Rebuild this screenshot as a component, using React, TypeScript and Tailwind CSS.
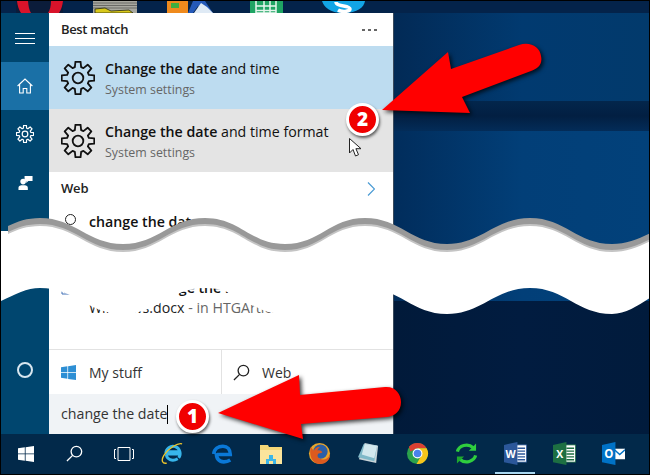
import React from 'react'

const FONT = "font-['Open_Sans','Noto_Sans',sans-serif]"

// eight toothed cog outline, same shape in the results and (smaller) in the sidebar
const cogPath = () => {
  const pts: string[] = []
  const teeth = 8
  for (let i = 0; i < teeth; i++) {
    const a = (i / teeth) * Math.PI * 2 - Math.PI / 2
    const step = (Math.PI * 2) / teeth
    const spots: [number, number][] = [
      [10.6, a - step * 0.36],
      [15.5, a - step * 0.2],
      [15.5, a + step * 0.2],
      [10.6, a + step * 0.36],
    ]
    spots.forEach(([r, t]) => pts.push(`${(16 + r * Math.cos(t)).toFixed(2)} ${(16 + r * Math.sin(t)).toFixed(2)}`))
  }
  return `M${pts.join('L')}Z`
}

const Cog = ({ className, color = '#111', width = 1.7 }: { className: string; color?: string; width?: number }) => (
  <svg viewBox="0 0 32 32" className={className} fill="none" stroke={color} strokeWidth={width} strokeLinejoin="round">
    <path d={cogPath()} />
    <circle cx="16" cy="16" r="5" />
  </svg>
)

const Magnifier = ({ className, color }: { className: string; color: string }) => (
  <svg viewBox="0 0 18 18" className={className} fill="none" stroke={color} strokeWidth="1.4">
    <circle cx="11" cy="7" r="5.6" />
    <path d="M7 11 1 17" />
  </svg>
)

const WindowsMark = ({ className, color }: { className: string; color: string }) => (
  <svg viewBox="0 0 16 16" className={className} fill={color}>
    <path d="M0 2.3 6.8 1.3v6.2H0zM7.6 1.2 16 0v7.5H7.6zM0 8.3h6.8v6.4L0 13.7zM7.6 8.3H16V16l-8.4-1.2z" />
  </svg>
)

const ResultRow = ({ bg, tail }: { bg: string; tail: string }) => (
  <div className={`flex h-[63px] items-center ${bg}`}>
    <Cog className="ml-[12px] h-[34px] w-[34px] shrink-0" />
    <div className="ml-[10px] pt-[4px]">
      <div className="text-[14.2px] leading-[20px] text-[#111]">
        <span className="font-semibold">Change the date</span> {tail}
      </div>
      <div className="text-[12.4px] leading-[21px] text-[#666]">System settings</div>
    </div>
  </div>
)

const SideItem = ({ children, active }: { children: React.ReactNode; active?: boolean }) => (
  <div className={`flex h-[48px] items-center justify-center ${active ? 'bg-[#1a70a6]' : ''}`}>{children}</div>
)

const Sidebar = () => (
  <div className="flex w-[48px] shrink-0 flex-col bg-[#00466f]">
    <div className="flex h-[49px] flex-col items-center justify-center gap-[4px] pt-[2px]">
      <div className="h-px w-[20px] bg-white" />
      <div className="h-px w-[20px] bg-white" />
      <div className="h-px w-[20px] bg-white" />
    </div>
    <SideItem active>
      <svg viewBox="0 0 16 16" className="h-[16px] w-[16px]" fill="none" stroke="#fff" strokeWidth="1.1">
        <path d="M.6 8 8 1l7.4 7M2.6 6.5V15h3.6v-4.5h3.600V15h3.600V6.500" />
      </svg>
    </SideItem>
    <SideItem>
      <Cog className="h-[18px] w-[18px]" color="#fff" width={2.2} />
    </SideItem>
    <SideItem>
      <svg viewBox="0 0 16 16" className="h-[17px] w-[15px]" fill="#fff">
        <circle cx="5.5" cy="7" r="3" />
        <path d="M.5 16v-2.3C.5 11.6 2.5 11 5.5 11s5 .6 5 2.7V16z" />
        <path d="M7 1h8.5v5.500H11L8.800 8.400V6.500H7z" />
      </svg>
    </SideItem>
    <div className="mt-auto flex h-[84px] items-start justify-center pt-[12px]">
      <div className="h-[16px] w-[16px] rounded-full border-2 border-[#d8e6ef]" />
    </div>
  </div>
)

const Panel = () => (
  <div className="flex w-[345px] shrink-0 flex-col border-r border-[#3a4a5c] bg-white">
    <div className="flex h-[33px] items-center justify-between pl-[12px] pr-[16px]">
      <span className="text-[13px] font-semibold tracking-[-0.35px] text-[#222]">Best match</span>
      <span className="flex gap-[2px] pt-px">
        <i className="h-[2px] w-[3px] bg-[#666]" />
        <i className="ml-[1px] h-[2px] w-[3px] bg-[#666]" />
        <i className="ml-[1px] h-[2px] w-[3px] bg-[#666]" />
      </span>
    </div>
    <ResultRow bg="bg-[#bddcf0]" tail="and time" />
    <ResultRow bg="bg-[#e4e4e4]" tail="and time format" />
    <div className="flex h-[33px] items-center justify-between pl-[12px] pr-[18px]">
      <span className="text-[13px] font-semibold tracking-[-0.2px] text-[#222]">Web</span>
      <svg viewBox="0 0 8 14" className="h-[14px] w-[8px]" fill="none" stroke="#4a9bd4" strokeWidth="1.2">
        <path d="M1 .5 7.5 7 1 13.5" />
      </svg>
    </div>
    <div className="flex items-center pl-[16px] pt-[5px]">
      <div className="mb-[6px] h-[11px] w-[11px] rounded-full border border-[#222]" />
      <span className="ml-[13px] text-[14.2px] font-semibold leading-[24px] text-[#111]">change the date</span>
    </div>
    <div className="mt-auto flex flex-col pb-[31px]">
      <div className="flex items-center pl-[12px] pr-[47px]">
        <svg viewBox="0 0 12 14" className="h-[14px] w-[12px] shrink-0" fill="none" stroke="#3f6fb5">
          <path d="M1 1h7l3 3v9H1zM3 9h6M3 11h6" />
        </svg>
        <span className="ml-[18px] text-[14.2px] font-semibold leading-[20px] text-[#111]">How to Change the .</span>
        <span className="ml-auto h-[3px] w-[2px] bg-[#777]" />
      </div>
      <div className="pl-[40px] text-[14.2px] leading-[20px] text-[#222]">
        Windows.docx <span className="text-[#666]">- in HTGArticles</span>
      </div>
    </div>
    <div className="flex h-[45px] border-t border-[#e2e2e2]">
      <div className="flex w-[173px] items-center border-r border-[#e2e2e2] pl-[12px]">
        <WindowsMark className="h-[15px] w-[15px]" color="#2e8fd4" />
        <span className="ml-[13px] text-[14px] text-[#333]">My stuff</span>
      </div>
      <div className="flex items-center pl-[11px]">
        <Magnifier className="h-[17px] w-[17px]" color="#222" />
        <span className="ml-[12px] text-[14px] text-[#333]">Web</span>
      </div>
    </div>
    <div className="flex h-[40px] items-center bg-[#f0f3f6] pl-[12px]">
      <span className="text-[14.2px] text-[#333]">change the date</span>
      <span className="h-[19px] w-px bg-black" />
    </div>
  </div>
)

const TopStrip = () => (
  <div className="flex h-[12px] shrink-0 overflow-hidden bg-[#04234a]">
    <svg viewBox="0 0 47 12" className="ml-[15px] h-[12px] w-[47px] shrink-0">
      <rect width="47" height="12" fill="#0b1c3a" />
      <path d="M1 0H12C12.500 5 13 9 15 12H5C3 9 1.500 5 1 0Z" fill="#d9132a" />
      <path d="M35 0H47C46.500 5 45 9 43 12H32C34 9 35 5 35 0Z" fill="#d9132a" />
    </svg>
    <svg viewBox="0 0 44 12" className="ml-[30px] h-[12px] w-[44px] shrink-0">
      <rect width="44" height="12" fill="#a8a8a0" />
      <path d="M0 2H44M0 4.500H44M0 7H44" stroke="#6a6a66" />
      <path d="M2 8 12 7 18 10 36 9 40 12H2Z" fill="#d8c81a" stroke="#2a2a10" strokeWidth=".8" />
    </svg>
    <svg viewBox="0 0 46 12" className="ml-[30px] h-[12px] w-[46px] shrink-0">
      <rect x="0" y="0" width="21" height="12" fill="#ef8a1d" />
      <path d="M4 2h8v5H4z" fill="#3fae3f" />
      <path d="M21 12 26 0H38L46 12H38L31 5 26 12Z" fill="#2459b8" />
      <path d="M27 12 34 2 40 6 46 12Z" fill="#dfeaf5" />
    </svg>
    <svg viewBox="0 0 33 12" className="ml-[37px] h-[12px] w-[33px] shrink-0">
      <rect width="33" height="12" fill="#1fa463" />
      <path d="M6 0V12H26V0M6 5H26M6 9.500H26M14 0V12M20 0V12" fill="none" stroke="#e8f6ee" strokeWidth="1.500" />
    </svg>
    <svg viewBox="0 0 43 12" className="ml-[39px] h-[12px] w-[43px] shrink-0">
      <path d="M0 0H43C42 6 36 12 21 12 8 12 2 6 0 0Z" fill="#12a5e6" />
      <path d="M14 1C14 6 28 4 28 8 28 11 19 11 16 9" fill="none" stroke="#fff" strokeWidth="3.500" />
    </svg>
  </div>
)

const Desktop = () => (
  <div className="flex min-w-0 flex-1 flex-col">
    <div className="h-[88px] bg-gradient-to-r from-[#022a56] via-[#013a70] to-[#023a6c]" />
    <div className="h-[30px] bg-gradient-to-b from-[#03264c] via-[#021f42] to-[#032c58]" />
    <div className="h-[170px] bg-gradient-to-r from-[#012d5c] via-[#023f78] to-[#02417a]" />
    <div className="flex-1 bg-gradient-to-r from-[#011a3a] via-[#011c40] to-[#011b3c]" />
  </div>
)

const taskIcons: React.ReactNode[] = [
  <WindowsMark key="start" className="h-[16px] w-[16px]" color="#fff" />,
  <Magnifier key="search" className="h-[17px] w-[17px]" color="#fff" />,
  <svg key="view" viewBox="0 0 20 14" className="h-[14px] w-[20px]" fill="none" stroke="#fff" strokeWidth="1">
    <path d="M4 .5H16V13.500H4zM2 2.500H.5V11.500H2M18 2.500H19.500V11.500H18" />
  </svg>,
  <svg key="ie" viewBox="0 0 24 24" className="h-[23px] w-[23px]" fill="none">
    <path d="M5 12a7.500 7.500 0 1 1 13.500 4.500M5 12.500h14.500a7.500 7.500 0 0 0-.5-2.500H6" stroke="#37b5ea" strokeWidth="3" />
    <path d="M5.500 13c.5 5 6 8 12 4.500" stroke="#37b5ea" strokeWidth="3" />
    <path d="M22 2C18 .5 8 6 3 14-.5 20 2 23 6 22" stroke="#eec52a" strokeWidth="1.400" />
  </svg>,
  <svg key="edge" viewBox="0 0 24 24" className="h-[22px] w-[22px]" fill="none" stroke="#0a78d7">
    <path d="M3 12C3.500 6.500 8 3.500 13 3.500c5 0 8 3.500 8 9H6.500" strokeWidth="4" />
    <path d="M6 11c-.5 6 3 9.500 8 9.500 2.500 0 5-.7 7-2" strokeWidth="4" />
  </svg>,
  <svg key="folder" viewBox="0 0 22 20" className="h-[20px] w-[22px]">
    <path d="M0 1h8l1 2h13v17H0z" fill="#f5d777" />
    <path d="M0 6h22v14H0z" fill="#fbe49c" />
    <path d="M6 20v-5h3V11h4v4h3v5h-3v-3H9v3z" fill="#3cb6e8" />
  </svg>,
  <svg key="fox" viewBox="0 0 24 24" className="h-[23px] w-[23px]">
    <circle cx="12" cy="12" r="11" fill="#e8a52a" />
    <circle cx="13" cy="10" r="7.500" fill="#2a5fa8" />
    <path d="M3 5C1 12 3 23 13 23c6 0 10-5 10-10-2 4-5 6-9 5-4-1-5-4-3-6 2 0 3-1 4-1-1-2-3-3-5-2 0-1 1-3 3-4-4 0-6 2-7 4C5 8 4 7 3 5Z" fill="#dc5a1f" />
  </svg>,
  <svg key="note" viewBox="0 0 24 24" className="h-[23px] w-[23px]">
    <path d="M8 1 22 4 20 22 2 18Z" fill="#c9d4d8" />
    <path d="M7 2 21 4 18 20 1 16Z" fill="#7fb8c8" />
    <path d="M8 2 21 4 18 17 5 13Z" fill="#d3e8ee" />
  </svg>,
  <svg key="chrome" viewBox="0 0 24 24" className="h-[23px] w-[23px]">
    <circle cx="12" cy="12" r="11" fill="#2ba24c" />
    <path d="M12 1A11 11 0 0 1 21.500 6.500H12L4.500 10 3 5A11 11 0 0 1 12 1Z" fill="#dc4032" />
    <path d="M21.500 6.500A11 11 0 0 1 11 23L16 14 12 6.500Z" fill="#f6c51c" />
    <circle cx="12" cy="12" r="5.200" fill="#fff" />
    <circle cx="12" cy="12" r="4" fill="#4a82ea" />
  </svg>,
  <svg key="sync" viewBox="0 0 24 24" className="h-[23px] w-[23px]" fill="none" stroke="#2fce3e" strokeWidth="3.400">
    <path d="M2.500 10C4 4 13 .5 19 6" />
    <path d="M21.500 14C20 20 11 23.500 5 18" />
    <path d="M22 1.500V9h-7.500z" fill="#2fce3e" stroke="none" />
    <path d="M2 22.500V15h7.500z" fill="#1ea82e" stroke="none" />
  </svg>,
  <OfficeIcon key="word" letter="W" color="#2b579a" />,
  <OfficeIcon key="excel" letter="X" color="#1d6f42" />,
  <svg key="outlook" viewBox="0 0 24 24" className="h-[23px] w-[23px]">
    <path d="M13 7h11v11H13z" fill="#fff" />
    <path d="m13 8 5.500 5L24 8" fill="none" stroke="#0072c6" strokeWidth="1.500" />
    <path d="M0 3 14 0v24L0 21Z" fill="#0072c6" />
    <text x="7" y="17" textAnchor="middle" fontSize="12" fontWeight="700" fill="#fff" fontFamily="Open Sans">O</text>
  </svg>,
]

function OfficeIcon({ letter, color }: { letter: string; color: string }) {
  return (
    <svg viewBox="0 0 24 24" className="h-[23px] w-[23px]">
      <path d="M12 3h11.500v18H12z" fill="#fff" stroke={color} strokeWidth=".8" />
      <path d="M14 6.500h8M14 9.500h8M14 12.500h8M14 15.500h8M14 18.500h8" stroke={color} strokeWidth="1.500" />
      <path d="M0 3 14 0v24L0 21Z" fill={color} />
      <text x="7" y="16.500" textAnchor="middle" fontSize="11" fontWeight="700" fill="#fff" fontFamily="Open Sans">{letter}</text>
    </svg>
  )
}

const Taskbar = () => (
  <div className="flex h-[40px] shrink-0 bg-[#02294a]">
    {taskIcons.map((icon, i) => (
      <div key={i} className="relative flex h-full w-[49px] shrink-0 items-center justify-center pb-[1px]">
        {icon}
        {i === 10 && <div className="absolute bottom-0 left-[4px] h-[2px] w-[40px] bg-[#a9d8f2]" />}
      </div>
    ))}
  </div>
)

// torn paper band across the middle of the screenshot
const WAVE_TOP =
  'M-42 244C-8 244 5 218 40 218C75 218 88 244 123 244C158 244 170 218 205 218C240 218 250 244 285 244C320 244 330 218 365 218C400 218 412 244 447 244C482 244 495 218 530 218C565 218 577 244 612 244C630 244 645 236 660 228'
const WAVE_BOTTOM =
  'M-5 270L660 270L660 292C645 300 630 314 612 314C577 314 565 288 530 288C495 288 482 314 447 314C412 314 400 288 365 288C330 288 320 314 285 314C250 314 240 288 205 288C170 288 158 314 123 314C88 314 75 288 40 288C25 288 12 296 -5 304Z'
const TOP_FILL = `${WAVE_TOP}L660 275L-42 275Z`

const TornBand = () => (
  <svg viewBox="0 0 650 475" className="pointer-events-none absolute left-0 top-0 h-[475px] w-[650px]">
    <clipPath id="shadow-clip">
      <rect x="8" y="200" width="641" height="80" />
    </clipPath>
    <rect x="1" y="231" width="8" height="50" fill="#fff" />
    <g clipPath="url(#shadow-clip)">
      <path d={TOP_FILL} fill="#999" />
      <path d={TOP_FILL} fill="#c4c4c4" transform="translate(0 6)" />
      <path d={TOP_FILL} fill="#fff" transform="translate(0 8)" />
    </g>
    <path d={WAVE_BOTTOM} fill="#fff" />
    <rect x="0" y="226" width="1" height="78" fill="#000" />
    <rect x="649" y="226" width="1" height="70" fill="#000" />
  </svg>
)

const Arrow = ({ d }: { d: string }) => (
  <path d={d} fill="#ff0000" className="[filter:drop-shadow(2px_2px_2px_rgba(0,0,0,0.75))]" />
)

const Arrows = () => (
  <svg viewBox="0 0 650 475" className="pointer-events-none absolute left-0 top-0 h-[475px] w-[650px]">
    <Arrow d="M382 110 448 52 451 69 519 45C530 41 540 47 541 56 543 65 537 69 531 71L462 97 470 113Z" />
    <Arrow d="M218 413 299 375 300 395 385 387C395 386 401 394 401 402 401 411 395 416 387 417L301 424 303 439Z" />
  </svg>
)

const Badge = ({ n, className }: { n: number; className: string }) => (
  <div
    className={`absolute flex h-[33px] w-[33px] items-center justify-center rounded-full border-[3px] border-white bg-[#f00000] text-[19px] font-extrabold leading-none text-white shadow-[1px_2px_3px_rgba(0,0,0,0.6)] ${className}`}
  >
    {n}
  </div>
)

const Cursor = () => (
  <svg viewBox="0 0 13 20" className="absolute left-[349px] top-[138px] h-[20px] w-[13px]" fill="#fff" stroke="#222" strokeWidth="1">
    <path d="M.5.5V15l3.500-3.500L6.500 18l3-1.300-2.600-6H12Z" />
  </svg>
)

export default function App() {
  return (
    <div className={`relative flex h-[475px] w-[650px] flex-col overflow-hidden border border-black bg-[#02294a] ${FONT}`}>
      <TopStrip />
      <div className="flex min-h-0 flex-1">
        <Sidebar />
        <Panel />
        <Desktop />
      </div>
      <Taskbar />
      <div className="absolute left-[-1px] top-[-1px] h-[475px] w-[650px]">
        <TornBand />
        <Arrows />
        <Badge n={1} className="left-[176px] top-[400px]" />
        <Badge n={2} className="left-[346px] top-[103px]" />
        <Cursor />
      </div>
    </div>
  )
}
